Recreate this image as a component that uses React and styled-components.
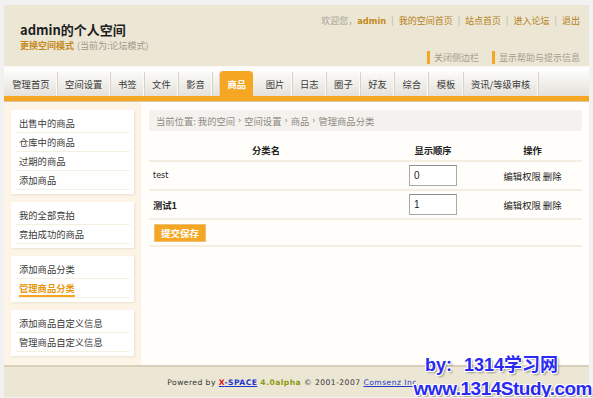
import React from "react";
import styled, { createGlobalStyle } from "styled-components";

const GlobalStyle = createGlobalStyle`
  html, body { margin: 0; padding: 0; }
  body {
    background: #f1f1f1;
    font-family: "Noto Sans CJK SC", "Noto Sans", sans-serif;
    font-size: 9px;
    color: #333;
  }
  a { text-decoration: none; color: inherit; }
`;

const Page = styled.div`
  position: relative;
  width: 585px;
  margin: 5px 0 0 4px;
  background: #fffefa;
`;

const Header = styled.div`
  height: 61px;
  background: #ece6d5;
  display: flex;
  justify-content: space-between;
  padding: 0 9px 0 16px;
  border-bottom: 2px solid #fbfaf6;
  box-sizing: content-box;
  width: 560px;
`;

const HeaderLeft = styled.div`
  padding-top: 17px;
`;

const Title = styled.h1`
  margin: 0;
  font-size: 13px;
  line-height: 16px;
  height: 16px;
  font-weight: bold;
  color: #1e1e1e;
`;

const SubTitle = styled.div`
  margin-top: 2px;
  font-size: 9px;
  line-height: 11px;
  color: #a09a8c;
  a { color: #c48a1c; font-weight: bold; margin-right: 3px; }
`;

const HeaderRight = styled.div`
  padding-top: 9px;
  display: flex;
  flex-direction: column;
  align-items: flex-end;
`;

const TopLinks = styled.div`
  font-size: 9px;
  line-height: 14px;
  color: #a8a294;
  display: flex;
  align-items: center;
`;

const TopLink = styled.a`
  color: ${(p) => (p.$strong ? "#c48a1c" : "#b57f17")};
  font-weight: ${(p) => (p.$strong ? "bold" : "normal")};
  font-family: ${(p) => (p.$strong ? '"DejaVu Sans", sans-serif' : "inherit")};
  font-size: ${(p) => (p.$strong ? "8.3px" : "9px")};
`;

const Sep = styled.span`
  color: #b9b3a5;
  margin: 0 5px;
`;

const ToolLinks = styled.div`
  margin-top: 23px;
  display: flex;
  gap: 13px;
`;

const ToolLink = styled.a`
  display: flex;
  align-items: center;
  height: 13px;
  padding-left: 4px;
  border-left: 3px solid #f5a623;
  color: #a39d8f;
  font-size: 9px;
`;

const Nav = styled.div`
  height: 28px;
  padding: 4px 0 0 1px;
  box-sizing: border-box;
  display: flex;
  align-items: flex-end;
  background: linear-gradient(#ffffff 0%, #f4f3ef 40%, #e3e1da 100%);
`;

const Tab = styled.a`
  height: 24px;
  display: flex;
  align-items: center;
  padding: 0 7.3px;
  font-size: 9.3px;
  color: ${(p) => (p.$active ? "#ffffff" : "#3a3a3a")};
  font-weight: ${(p) => (p.$active ? "bold" : "normal")};
  background: ${(p) => (p.$active ? "#f5a623" : "transparent")};
  border-radius: ${(p) => (p.$active ? "4px 4px 0 0" : "0")};
  border-right: ${(p) => (p.$active ? "none" : "1px solid #d6d3ca")};
  box-shadow: ${(p) => (p.$active ? "none" : "inset -1px 0 0 #fbfaf6")};
  margin: ${(p) => (p.$active ? "0 5px 0 6px" : "0")};
  ${(p) => p.$active && "height: 25px; border-left: 1px solid #d6d3ca;"}
`;

const OrangeBar = styled.div`
  height: 5px;
  background: #f5a623;
  border-bottom: 1px solid #d9c9a0;
`;

const Main = styled.div`
  display: grid;
  grid-template-columns: 137px 1fr;
  min-height: 263px;
`;

const Sidebar = styled.div`
  background: #fcf5e7;
  padding: 8px 7px;
  display: flex;
  flex-direction: column;
  gap: 8px;
`;

const MenuBox = styled.ul`
  list-style: none;
  margin: 0;
  padding: 4px;
  background: #ffffff;
  box-shadow: 1px 1px 2px rgba(160, 140, 100, 0.2);
`;

const MenuItem = styled.li`
  height: 19px;
  box-sizing: border-box;
  padding-left: 4px;
  display: flex;
  align-items: center;
  border-bottom: 1px solid #f6f0e2;
  font-size: 9.3px;
  color: #3a3a3a;
`;

const ActiveText = styled.span`
  color: #e8960c;
  font-weight: bold;
  border-bottom: 2px solid #f5a623;
  line-height: 13px;
  margin-top: 3px;
`;

const Content = styled.div`
  padding: 8px 7px 8px 8px;
  background: #fffefa;
`;

const Crumb = styled.div`
  height: 21px;
  display: flex;
  align-items: center;
  padding-left: 7px;
  background: #f4f2ee;
  border-radius: 2px;
  color: #8f8a80;
  font-size: 9.3px;
`;

const Arrow = styled.span`
  margin: 0 3px;
  font-family: "DejaVu Sans", sans-serif;
  font-size: 8px;
`;

const Table = styled.table`
  width: 100%;
  table-layout: fixed;
  margin-top: 8px;
  border-collapse: collapse;
  font-size: 9.3px;
  color: #222;
`;

const Th = styled.th`
  height: 21px;
  padding: 0;
  font-weight: bold;
  text-align: center;
  border-bottom: 2px solid #f3eee0;
  width: ${(p) => p.$w || "auto"};
`;

const Td = styled.td`
  height: ${(p) => p.$h || "27px"};
  border-bottom: 2px solid #f3eee0;
  text-align: ${(p) => p.$align || "center"};
  padding: ${(p) => (p.$align === "left" ? "0 0 0 4px" : "0")};
  font-weight: ${(p) => (p.$bold ? "bold" : "normal")};
  font-family: ${(p) => (p.$latin ? '"DejaVu Sans", sans-serif' : "inherit")};
  font-size: ${(p) => (p.$latin ? "8px" : "9.3px")};
`;

const OrderInput = styled.input`
  width: 48px;
  height: 21px;
  box-sizing: border-box;
  border: 1px solid #a9a9a9;
  border-top-color: #8e8e8e;
  padding: 0 0 0 4px;
  font-family: "Liberation Sans", Arial, sans-serif;
  font-size: 10px;
  color: #222;
  background: #fff;
  outline: none;
`;

const SubmitButton = styled.button`
  height: 18px;
  padding: 0 6px;
  margin-left: 1px;
  background: #f5a623;
  border: 1px solid #ecc176;
  color: #ffffff;
  font-family: "Noto Sans CJK SC", sans-serif;
  font-weight: bold;
  font-size: 9.5px;
  line-height: 16px;
  cursor: pointer;
`;

const Footer = styled.div`
  height: 30px;
  background: #ece6d5;
  border-top: 2px solid #d8d0bd;
  display: flex;
  align-items: center;
  justify-content: center;
  padding-right: 6px;
  font-family: "DejaVu Sans", sans-serif;
  font-size: 7.6px;
  letter-spacing: 0.45px;
  color: #333;
`;

const XLink = styled.a`
  font-weight: bold;
  color: #1d38c8;
  text-decoration: underline;
  margin: 0 3px;
  span { color: #e01010; }
`;

const Version = styled.b`
  color: #8c9a12;
  margin-right: 3px;
`;

const Comsenz = styled.a`
  color: #2438c8;
  text-decoration: underline;
  margin-left: 3px;
`;

const Watermark = styled.div`
  position: absolute;
  right: -3px;
  bottom: -3px;
  font-family: "Liberation Sans", Arial, "Noto Sans CJK SC", sans-serif;
  font-weight: bold;
  color: #2a2af0;
  text-shadow: 1px 1px 0 #fff, -1px -1px 0 #fff, 1px -1px 0 #fff, -1px 1px 0 #fff, 2px 2px 2px rgba(0,0,0,0.35);
  line-height: 23px;
`;

const WmLine1 = styled.div`
  display: flex;
  justify-content: flex-end;
  gap: 12px;
  padding-right: 34px;
  font-size: 18px;
`;

const WmLine2 = styled.div`
  font-size: 19px;
  letter-spacing: -0.5px;
`;

const tabs = ["管理首页", "空间设置", "书签", "文件", "影音", "商品", "图片", "日志", "圈子", "好友", "综合", "模板", "资讯/等级审核"];

const menus = [
  ["出售中的商品", "仓库中的商品", "过期的商品", "添加商品"],
  ["我的全部竞拍", "竞拍成功的商品"],
  ["添加商品分类", "*管理商品分类"],
  ["添加商品自定义信息", "管理商品自定义信息"],
];

export default function App() {
  return (
    <>
      <GlobalStyle />
      <Page>
        <Header>
          <HeaderLeft>
            <Title>admin的个人空间</Title>
            <SubTitle>
              <a href="#">更换空间模式</a>(当前为:论坛模式)
            </SubTitle>
          </HeaderLeft>
          <HeaderRight>
            <TopLinks>
              欢迎您，<TopLink $strong href="#">admin</TopLink>
              <Sep>|</Sep>
              <TopLink href="#">我的空间首页</TopLink>
              <Sep>|</Sep>
              <TopLink href="#">站点首页</TopLink>
              <Sep>|</Sep>
              <TopLink href="#">进入论坛</TopLink>
              <Sep>|</Sep>
              <TopLink href="#">退出</TopLink>
            </TopLinks>
            <ToolLinks>
              <ToolLink href="#">关闭侧边栏</ToolLink>
              <ToolLink href="#">显示帮助与提示信息</ToolLink>
            </ToolLinks>
          </HeaderRight>
        </Header>
        <Nav>
          {tabs.map((t) => (
            <Tab key={t} href="#" $active={t === "商品"}>
              {t}
            </Tab>
          ))}
        </Nav>
        <OrangeBar />
        <Main>
          <Sidebar>
            {menus.map((group, i) => (
              <MenuBox key={i}>
                {group.map((m) =>
                  m.startsWith("*") ? (
                    <MenuItem key={m}>
                      <ActiveText>{m.slice(1)}</ActiveText>
                    </MenuItem>
                  ) : (
                    <MenuItem key={m}>{m}</MenuItem>
                  )
                )}
              </MenuBox>
            ))}
          </Sidebar>
          <Content>
            <Crumb>
              当前位置: 我的空间<Arrow>›</Arrow>空间设置<Arrow>›</Arrow>商品<Arrow>›</Arrow>管理商品分类
            </Crumb>
            <Table>
              <thead>
                <tr>
                  <Th $w="234px">分类名</Th>
                  <Th $w="100px">显示顺序</Th>
                  <Th>操作</Th>
                </tr>
              </thead>
              <tbody>
                <tr>
                  <Td $align="left" $latin>test</Td>
                  <Td><OrderInput defaultValue="0" /></Td>
                  <Td>编辑权限 删除</Td>
                </tr>
                <tr>
                  <Td $align="left" $bold>测试1</Td>
                  <Td><OrderInput defaultValue="1" /></Td>
                  <Td>编辑权限 删除</Td>
                </tr>
                <tr>
                  <Td $align="left" $h="25px" colSpan={3}>
                    <SubmitButton>提交保存</SubmitButton>
                  </Td>
                </tr>
              </tbody>
            </Table>
          </Content>
        </Main>
        <Footer>
          Powered by
          <XLink href="#"><span>X</span>-SPACE</XLink>
          <Version>4.0alpha</Version>© 2001-2007
          <Comsenz href="#">Comsenz Inc.</Comsenz>
        </Footer>
        <Watermark>
          <WmLine1><span>by:</span><span>1314学习网</span></WmLine1>
          <WmLine2>www.1314Study.com</WmLine2>
        </Watermark>
      </Page>
    </>
  );
}
